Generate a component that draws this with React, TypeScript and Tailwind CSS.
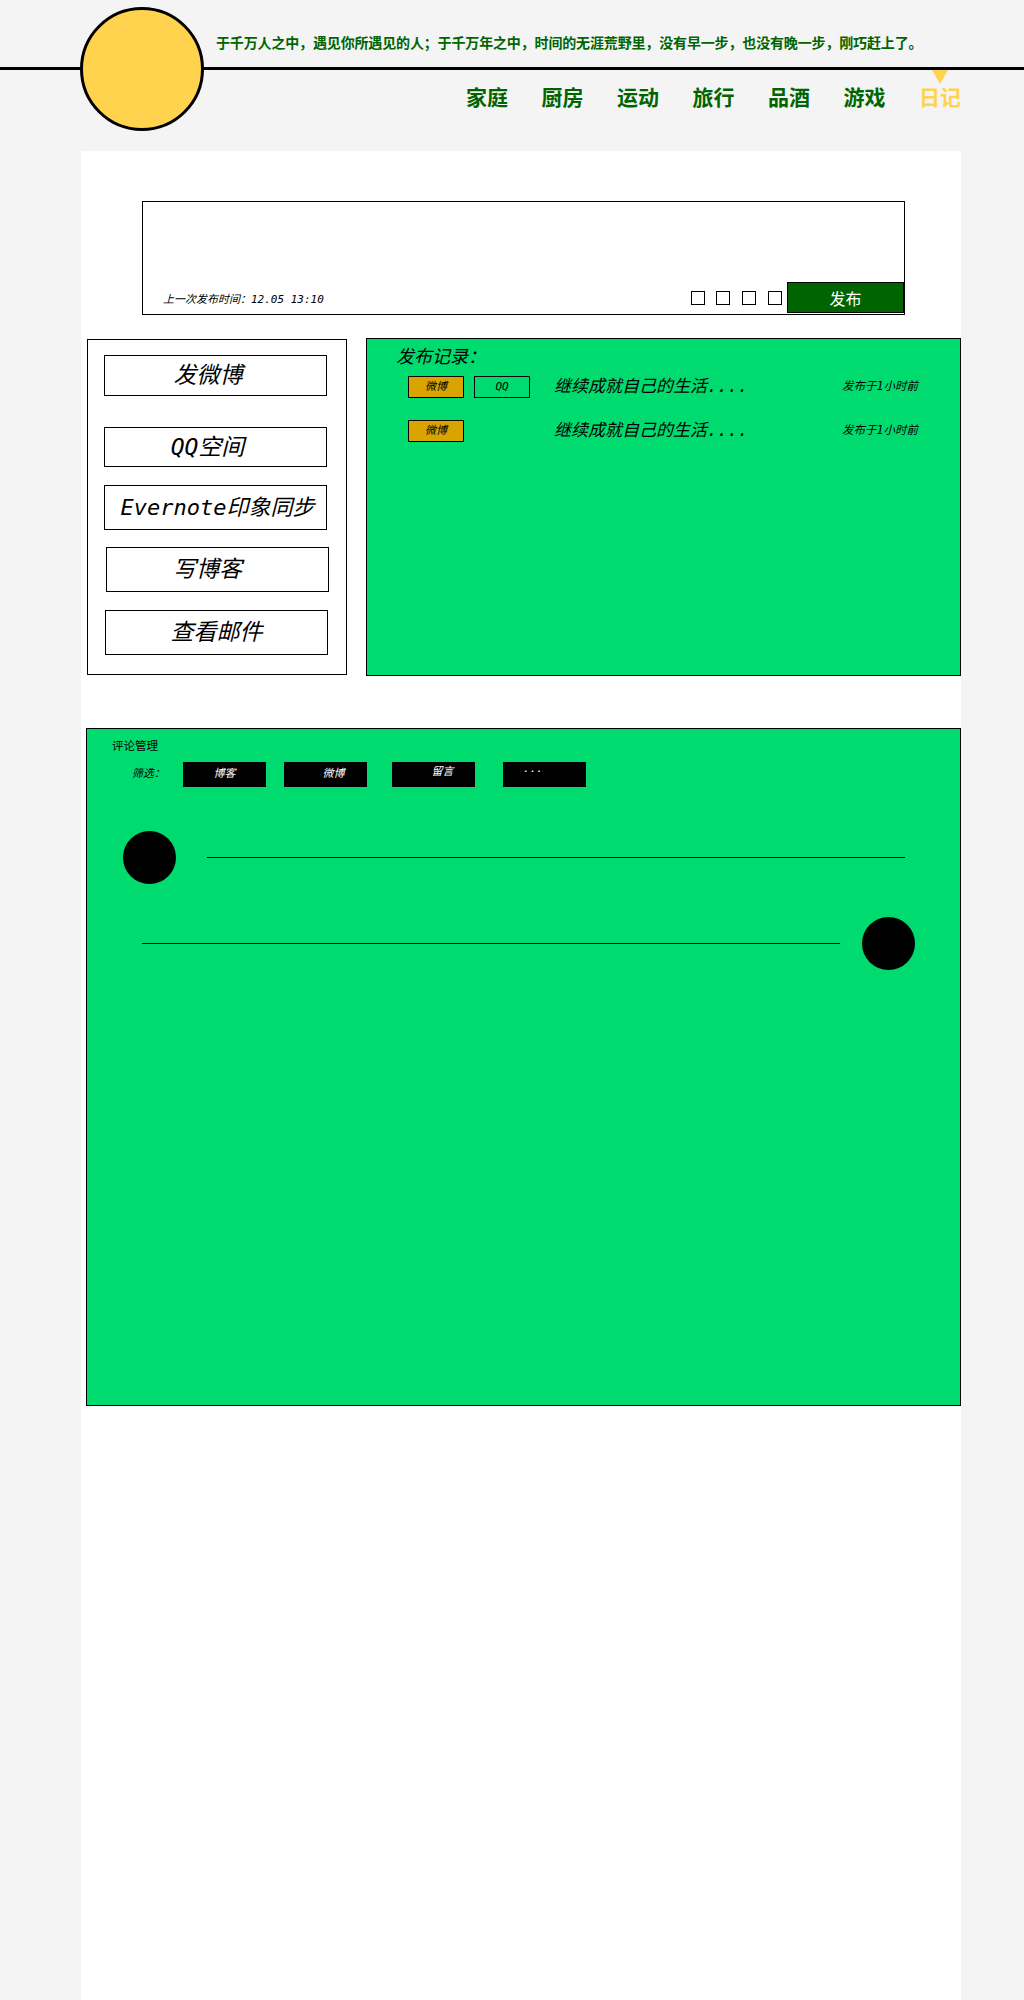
const mono = "font-['DejaVu_Sans_Mono','Noto_Sans_CJK_SC',monospace]";

function SideButton({ label, className }: { label: string; className: string }) {
  return (
    <div
      className={`flex items-center justify-center border border-black italic text-black ${mono} ${className}`}
    >
      {label}
    </div>
  );
}

function Tag({ label, filled }: { label: string; filled?: boolean }) {
  return (
    <div
      className={`flex h-[22px] w-[56px] items-center justify-center border border-black text-[11px] italic text-black ${mono} ${
        filled ? "bg-[#d9a400]" : ""
      }`}
    >
      {label}
    </div>
  );
}

function FilterButton({ label, className }: { label: string; className: string }) {
  return (
    <div
      className={`flex h-[25px] w-[83px] items-center justify-center bg-black text-[11px] italic text-white ${mono} ${className}`}
    >
      {label}
    </div>
  );
}

export default function App() {
  const navItems = ["家庭", "厨房", "运动", "旅行", "品酒", "游戏"];
  return (
    <div className="flex min-h-[2000px] flex-col bg-[#f4f4f4] font-['Noto_Sans_CJK_SC',sans-serif]">
      <header className="relative h-[151px] shrink-0">
        <div className="h-[67px] pl-[216px] pt-[33px]">
          <p className="whitespace-nowrap text-[14px] font-bold leading-[18px] tracking-[-0.15px] text-[#006400]">
            于千万人之中，遇见你所遇见的人；于千万年之中，时间的无涯荒野里，没有早一步，也没有晚一步，刚巧赶上了。
          </p>
        </div>
        <div className="h-[3px] bg-black" />
        <nav className="flex gap-[33.5px] pl-[466px] pt-[11px]">
          {navItems.map((n) => (
            <span key={n} className="text-[21px] font-bold leading-[30px] text-[#006400]">
              {n}
            </span>
          ))}
          <span className="relative text-[21px] font-bold leading-[30px] text-[#ffd34e]">
            <svg
              className="absolute left-1/2 top-[-11px] -translate-x-1/2"
              width="16"
              height="14"
              viewBox="0 0 16 14"
            >
              <polygon points="0,0 16,0 8,14" fill="#ffd34e" />
            </svg>
            日记
          </span>
        </nav>
        <div className="absolute left-[80px] top-[7px] h-[124px] w-[124px] rounded-full border-[3px] border-black bg-[#ffd34e]" />
      </header>

      <main className="ml-[81px] w-[880px] flex-1 bg-white pt-[50px]">
        <div className="ml-[61px] flex h-[114px] w-[763px] flex-col justify-end border border-black">
          <div className="flex items-center pb-[1px]">
            <span className={`mt-[5px] flex-1 pl-[20px] text-[11px] italic text-black ${mono}`}>
              上一次发布时间：12.05 13:10
            </span>
            <div className="mr-[11px] h-[14px] w-[14px] border border-black" />
            <div className="mr-[12px] h-[14px] w-[14px] border border-black" />
            <div className="mr-[12px] h-[14px] w-[14px] border border-black" />
            <div className="mr-[5px] h-[14px] w-[14px] border border-black" />
            <div className="flex h-[31px] w-[117px] items-center justify-center border border-black bg-[#006400] text-[16px] text-white">
              发布
            </div>
          </div>
        </div>

        <div className="mt-[23px] flex items-start">
          <div className="ml-[6px] mt-[1px] flex h-[336px] w-[260px] flex-col border border-black">
            <SideButton label="发微博" className="ml-[16px] mt-[15px] h-[41px] w-[223px] pr-[15px] text-[23px]" />
            <SideButton label="QQ空间" className="ml-[16px] mt-[31px] h-[40px] w-[223px] pr-[16px] text-[23px]" />
            <SideButton
              label="Evernote印象同步"
              className="ml-[16px] mt-[18px] h-[45px] w-[223px] pl-[4px] text-[22px]"
            />
            <SideButton label="写博客" className="ml-[18px] mt-[17px] h-[45px] w-[223px] pr-[20px] text-[23px]" />
            <SideButton label="查看邮件" className="ml-[17px] mt-[18px] h-[45px] w-[223px] text-[23px]" />
          </div>

          <div className="ml-[19px] h-[338px] w-[595px] border border-black bg-[#00db70]">
            <div className={`pl-[29px] pt-[7px] text-[18px] italic leading-[22px] text-black ${mono}`}>
              发布记录：
            </div>
            <div className="mt-[8px] flex h-[22px] items-center pl-[41px]">
              <Tag label="微博" filled />
              <div className="ml-[10px]">
                <Tag label="QQ" />
              </div>
              <span className={`ml-[24px] w-[288px] whitespace-nowrap text-[17px] italic text-black ${mono}`}>
                继续成就自己的生活....
              </span>
              <span className={`whitespace-nowrap text-[11.5px] italic text-black ${mono}`}>发布于1小时前</span>
            </div>
            <div className="mt-[22px] flex h-[22px] items-center pl-[41px]">
              <Tag label="微博" filled />
              <div className="ml-[10px] w-[56px]" />
              <span className={`ml-[24px] w-[288px] whitespace-nowrap text-[17px] italic text-black ${mono}`}>
                继续成就自己的生活....
              </span>
              <span className={`whitespace-nowrap text-[11.5px] italic text-black ${mono}`}>发布于1小时前</span>
            </div>
          </div>
        </div>

        <div className="ml-[5px] mt-[52px] h-[678px] w-[875px] border border-black bg-[#00db70]">
          <div className="pl-[25px] pt-[8px] text-[11.5px] leading-[16px] text-black">评论管理</div>
          <div className="mt-[9px] flex h-[25px] items-center">
            <span className={`ml-[45px] w-[51px] text-[11px] italic text-black ${mono}`}>筛选：</span>
            <FilterButton label="博客" className="" />
            <FilterButton label="微博" className="ml-[18px] pl-[16px]" />
            <FilterButton label="留言" className="ml-[25px] pb-[4px] pl-[18px]" />
            <FilterButton label="···" className="ml-[28px] pb-[4px] pr-[24px]" />
          </div>
          <div className="mt-[44px] flex items-center">
            <div className="ml-[36px] h-[53px] w-[53px] rounded-full bg-black" />
            <div className="ml-[31px] h-px w-[698px] bg-black" />
          </div>
          <div className="mt-[33px] flex items-center">
            <div className="ml-[55px] h-px w-[698px] bg-black" />
            <div className="ml-[22px] h-[53px] w-[53px] rounded-full bg-black" />
          </div>
        </div>
      </main>
    </div>
  );
}
